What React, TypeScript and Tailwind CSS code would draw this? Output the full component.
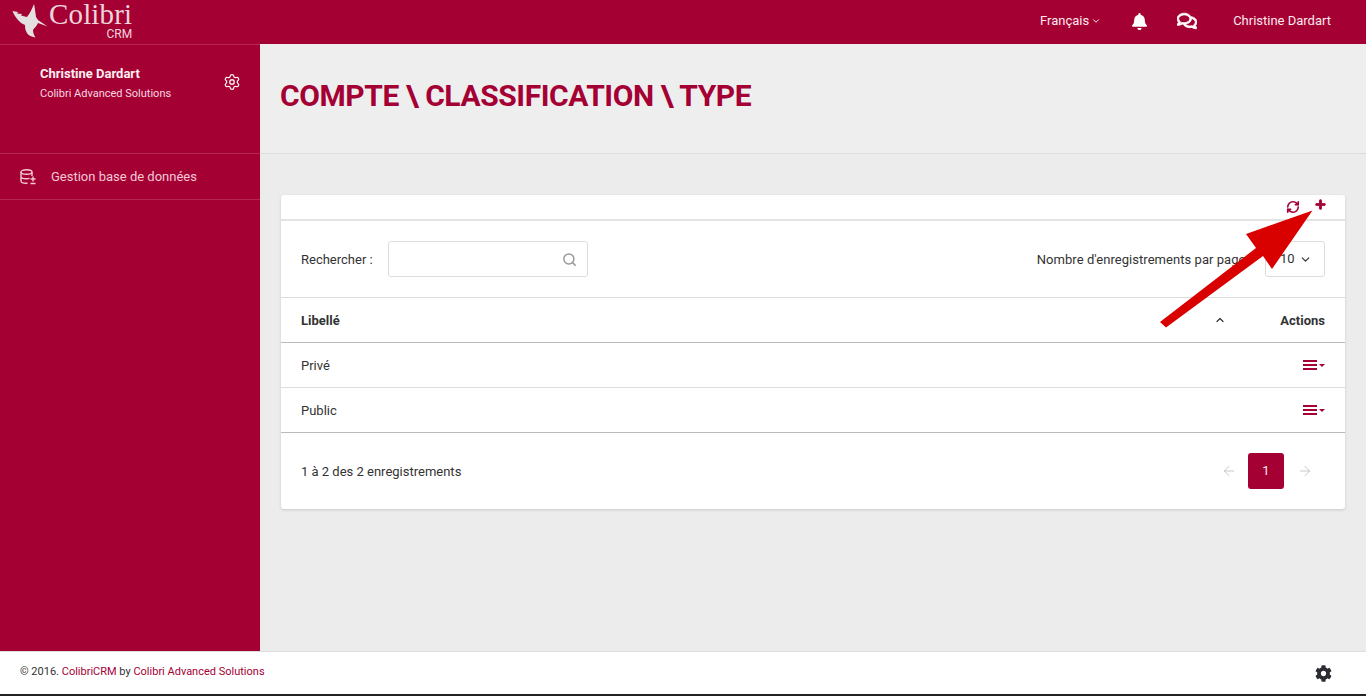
import React from 'react';
import { ChevronDown, ChevronUp, Search, RefreshCw, Settings, ArrowLeft, ArrowRight } from 'lucide-react';
import { FaBell, FaRegComments, FaCog, FaPlus } from 'react-icons/fa';

const Logo = () => (
  <div className="flex items-start h-full w-[140px] pl-[12px]">
    <svg width="36" height="36" viewBox="0 0 36 36" className="mt-[3px] shrink-0">
      <path d="M0.5 8 L6 9 L5 10.5 L10 11 L9 12.5 L15 14 C18 10 20 6 22 1 C23 6 23.5 10 24 14 L26 17 L35.5 23.5 L26 20 C25 23 22 25 21 27 C21 30 22 32 23.5 34.5 C19 34 16 32 15 30 C13 27 13 24 13 22 C10 21 8 19 6 17 C3.5 14 1.5 11 0.5 8 Z" fill="#e4dfe0" />
    </svg>
    <div className="flex flex-col items-end ml-[1px]">
      <span className="font-['Liberation_Serif',serif] text-[29px] tracking-[0.15px] leading-[27px] text-[#ecd5da] mt-[1px]">Colibri</span>
      <span className="text-[12px] leading-[12px] text-[#f0d5dc]">CRM</span>
    </div>
  </div>
);

const DbIcon = () => (
  <svg width="16" height="16" viewBox="0 0 16 16" fill="none" stroke="#f3c9d4" strokeWidth="1.4">
    <ellipse cx="6.5" cy="3" rx="5.5" ry="2.2" />
    <path d="M1 3v9c0 1.2 2.5 2.2 5.5 2.2h1M12 3v4M1 7.5c0 1.2 2.5 2.2 5.5 2.2 1 0 2-.1 3-.4" />
    <path d="M13 7.5v5M10.5 10h5M10.5 14.5h5" />
  </svg>
);

const RowMenu = () => (
  <div className="flex items-center gap-[2px]">
    <div className="flex flex-col gap-[2px] w-[14px]">
      <div className="h-[2px] bg-[#a50034]" />
      <div className="h-[2px] bg-[#a50034]" />
      <div className="h-[2px] bg-[#a50034]" />
    </div>
    <div className="w-0 h-0 border-x-[3px] border-x-transparent border-t-[3px] border-t-[#a50034]" />
  </div>
);

export default function App() {
  return (
    <div className="relative h-[696px] overflow-hidden flex flex-col bg-[#ececec] font-['Roboto',sans-serif] text-[13px] text-[#333]">
      <header className="h-[44px] shrink-0 bg-[#a50034] flex items-center justify-between text-white">
        <Logo />
        <div className="flex items-center pr-[35px] pb-[2px]">
          <span className="flex items-center gap-[2px] text-[13px] text-[#fbe9ee]">
            Français <ChevronDown size={10} strokeWidth={2.4} />
          </span>
          <FaBell size={17} className="ml-[30px]" />
          <FaRegComments size={20} stroke="currentColor" strokeWidth={24} className="ml-[29px]" />
          <span className="ml-[36px] text-[13px] text-[#fbe9ee]">Christine Dardart</span>
        </div>
      </header>

      <div className="flex flex-1 min-h-0">
        <aside className="w-[260px] shrink-0 bg-[#a50034] flex flex-col border-t border-[#b5284f]">
          <div className="h-[109px] pl-[40px] pr-[19px] pt-[22px] flex justify-between border-b border-[#b5284f]">
            <div>
              <div className="text-[13px] leading-[14px] font-bold text-[#fbeef1]">Christine Dardart</div>
              <div className="text-[11px] leading-[14px] text-[#f8d7e0] mt-[6px]">Colibri Advanced Solutions</div>
            </div>
            <Settings size={18} strokeWidth={1.7} className="text-[#fbeef1] mt-[6px]" />
          </div>
          <div className="h-[46px] pl-[20px] flex items-center gap-[15px] border-b border-[#b5284f] text-[13px] text-[#f3c9d4]">
            <DbIcon />
            <span>Gestion base de données</span>
          </div>
        </aside>

        <main className="flex-1 min-w-0 flex flex-col">
          <div className="h-[110px] shrink-0 bg-[#eeeeee] border-b border-[#dddddd] pl-[20px] flex items-center">
            <h1 className="text-[30px] font-bold text-[#a50034] tracking-[-0.42px] mt-[-6px]">COMPTE \ CLASSIFICATION \ TYPE</h1>
          </div>

          <div className="ml-[21px] mr-[21px] mt-[41px] bg-white rounded-[3px] shadow-[0_1px_3px_rgba(0,0,0,0.15)] flex flex-col">
            <div className="h-[26px] border-b-2 border-[#e3e3e3] flex items-center justify-end pr-[19px] gap-[15px] text-[#a50034]">
              <RefreshCw size={14} strokeWidth={2.8} />
              <FaPlus size={11} stroke="currentColor" strokeWidth={40} className="mt-[-5px]" />
            </div>

            <div className="h-[77px] px-[20px] flex items-center justify-between border-b border-[#dddddd]">
              <div className="flex items-center gap-[15px]">
                <span className="mt-[1px]">Rechercher :</span>
                <div className="w-[200px] h-[36px] border border-[#dddddd] rounded-[3px] flex items-center justify-end pr-[10px]">
                  <Search size={15} strokeWidth={2.4} className="text-[#999]" />
                </div>
              </div>
              <div className="flex items-center">
                <span className="tracking-[0.05px] mt-[1px]">Nombre d'enregistrements par page :</span>
                <div className="ml-[13px] w-[60px] h-[36px] border border-[#dddddd] rounded-[3px] flex items-center justify-between pl-[14px] pr-[12px]">
                  <span>10</span>
                  <ChevronDown size={13} strokeWidth={2.2} />
                </div>
              </div>
            </div>

            <div className="h-[45px] px-[20px] flex items-center border-b border-[#bbbbbb] font-bold">
              <span className="flex-1 mt-[1px]">Libellé</span>
              <ChevronUp size={12} strokeWidth={2.4} className="mr-[54px]" />
              <span className="mt-[1px]">Actions</span>
            </div>
            <div className="h-[45px] px-[20px] flex items-center justify-between border-b border-[#dddddd]">
              <span className="mt-[1px]">Privé</span>
              <RowMenu />
            </div>
            <div className="h-[45px] px-[20px] flex items-center justify-between border-b border-[#bbbbbb]">
              <span className="mt-[1px]">Public</span>
              <RowMenu />
            </div>

            <div className="h-[76px] pl-[20px] pr-[32px] flex items-center justify-between">
              <span className="mt-[1px]">1 à 2 des 2 enregistrements</span>
              <div className="flex items-center gap-[11px] text-[#bbbbbb]">
                <ArrowLeft size={16} strokeWidth={1.2} />
                <div className="w-[36px] h-[36px] rounded-[3px] bg-[#a50034] text-[#fbe9ee] flex items-center justify-center">1</div>
                <ArrowRight size={16} strokeWidth={1.2} className="ml-[2px]" />
              </div>
            </div>
          </div>
        </main>
      </div>

      <footer className="h-[43px] shrink-0 bg-white border-t border-[#dddddd] pl-[20px] pr-[34px] flex items-center justify-between text-[11px]">
        <span className="mb-[2px]">
          © 2016. <span className="text-[#a50034]">ColibriCRM</span> by <span className="text-[#a50034]">Colibri Advanced Solutions</span>
        </span>
        <FaCog size={17} className="text-[#2b2b33]" />
      </footer>
      <div className="h-[2px] shrink-0 bg-[#222]" />

      {/* annotation arrow drawn over the screenshot */}
      <svg className="absolute left-0 top-0 pointer-events-none" width="1366" height="696">
        <polygon points="1312.5,210.5 1246,234 1256,248 1160,322 1166,327.5 1263,256 1272,269" fill="#d90000" />
      </svg>
    </div>
  );
}
